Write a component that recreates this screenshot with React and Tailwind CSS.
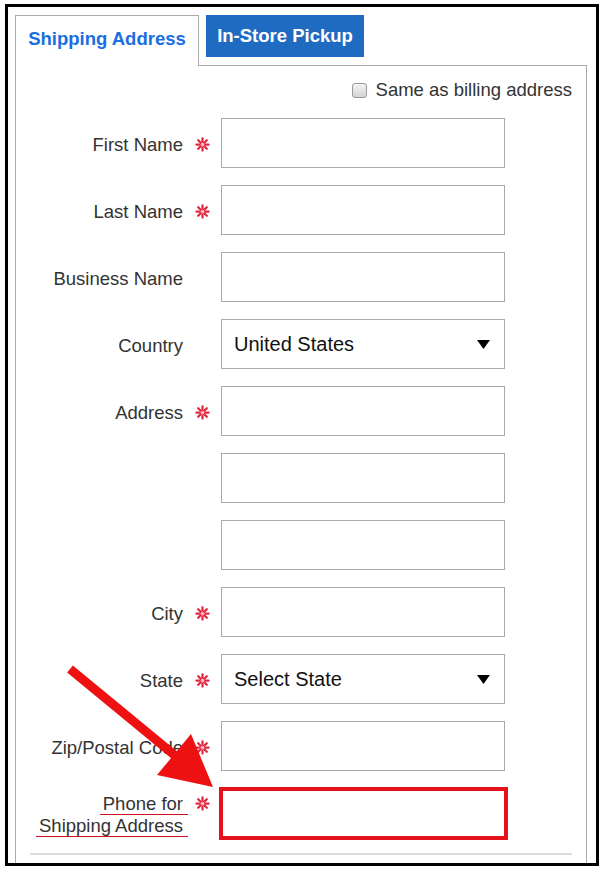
import React from 'react';

function Req() {
    return (
        <svg width="15" height="15" viewBox="0 0 16 16" className="block">
            <g stroke="#e0283f" strokeWidth="2.4" strokeLinecap="round">
                <line x1="8" y1="1.5" x2="8" y2="14.5" />
                <line x1="1.5" y1="8" x2="14.5" y2="8" />
                <line x1="3.4" y1="3.4" x2="12.6" y2="12.6" />
                <line x1="12.6" y1="3.4" x2="3.4" y2="12.6" />
            </g>
            <circle cx="8" cy="8" r="2" fill="#f7b7c0" />
        </svg>
    );
}

function Caret() {
    return (
        <svg width="13" height="9" viewBox="0 0 13 9" className="block">
            <path d="M0 0 H13 L6.5 9 Z" fill="#000" />
        </svg>
    );
}

function Field({ label, required, children }) {
    return (
        <div className="flex items-center h-[50px] mb-[17px]">
            <div className="w-[153px] text-right text-[18.5px] leading-[21px] text-[#333] pt-[3px]">{label}</div>
            <div className="w-[38px] flex justify-center pt-[3px]">{required && <Req />}</div>
            {children}
        </div>
    );
}

function TextBox() {
    return <div className="w-[284px] h-[50px] border border-[#a9a9a9] bg-white" />;
}

function SelectBox({ value }) {
    return (
        <div className="w-[284px] h-[50px] border border-[#a9a9a9] bg-white flex items-center justify-between pl-[12px] pr-[14px]">
            <span className="text-[20px] text-[#111]">{value}</span>
            <Caret />
        </div>
    );
}

export default function App() {
    return (
        <div className="relative w-[603px] h-[870px] bg-white" style={{ fontFamily: '"Liberation Sans", Arial, sans-serif' }}>
            <div className="ml-[5px] mt-[4px] w-[594px] h-[862px] border-[3px] border-black overflow-hidden px-[7px] pt-[8px]">

                {/* Tabs */}
                <div className="flex items-start">
                    <div className="relative z-10 w-[184px] h-[51px] border border-b-0 border-[#aaa] bg-white flex items-center justify-center">
                        <span className="text-[18.5px] font-bold text-[#1a6fe0] pb-[4px]">Shipping Address</span>
                    </div>
                    <div className="ml-[7px] w-[158px] h-[42px] bg-[#1f6bc2] flex items-center justify-center">
                        <span className="text-[18.5px] font-bold text-white">In-Store Pickup</span>
                    </div>
                </div>

                {/* Panel */}
                <div className="-mt-px w-[572px] border border-[#aaa] bg-white pt-[12px] pb-[40px]">
                    <div className="flex items-center justify-end h-6 pr-[14px]">
                        <div className="w-[15px] h-[15px] rounded-[3px] border border-[#9a9a9a] bg-gradient-to-b from-[#f4f4f4] to-[#d4d4d4] mr-[9px]" />
                        <span className="text-[18.5px] text-[#333]">Same as billing address</span>
                    </div>

                    <div className="mt-4 pl-[14px]">
                        <Field label="First Name" required><TextBox /></Field>
                        <Field label="Last Name" required><TextBox /></Field>
                        <Field label="Business Name"><TextBox /></Field>
                        <Field label="Country"><SelectBox value="United States" /></Field>
                        <Field label="Address" required><TextBox /></Field>
                        <Field><TextBox /></Field>
                        <Field><TextBox /></Field>
                        <Field label="City" required><TextBox /></Field>
                        <Field label="State" required><SelectBox value="Select State" /></Field>
                        <Field label="Zip/Postal Code" required><TextBox /></Field>
                        <div className="flex items-center h-[50px]">
                            <div className="w-[153px] flex flex-col items-end text-[18.5px] leading-[21px] text-[#333] pt-[5px]">
                                <span className="border-b border-[#d0101b] pl-[3px] pr-[5px] -mr-[5px] leading-[20px]">Phone for</span>
                                <span className="border-b border-[#d0101b] pl-[3px] pr-[5px] -mr-[5px] leading-[21px]">Shipping Address</span>
                            </div>
                            <div className="w-[38px] flex justify-center self-start pt-[8px]"><Req /></div>
                            <div className="-ml-[2px] w-[289px] h-[53px] border-[4px] border-[#e3121b] bg-white" />
                        </div>
                    </div>

                    <div className="mx-[14px] mt-[15px] h-[2px] bg-[#dcdcdc]" />
                </div>
            </div>

            {/* Annotation arrow */}
            <svg className="absolute left-0 top-0 pointer-events-none" width="603" height="870" viewBox="0 0 603 870">
                <line x1="70" y1="665" x2="178" y2="754" stroke="#ee1111" strokeWidth="9" />
                <polygon points="213,783 157,771 191,730" fill="#ee1111" />
            </svg>
        </div>
    );
}
